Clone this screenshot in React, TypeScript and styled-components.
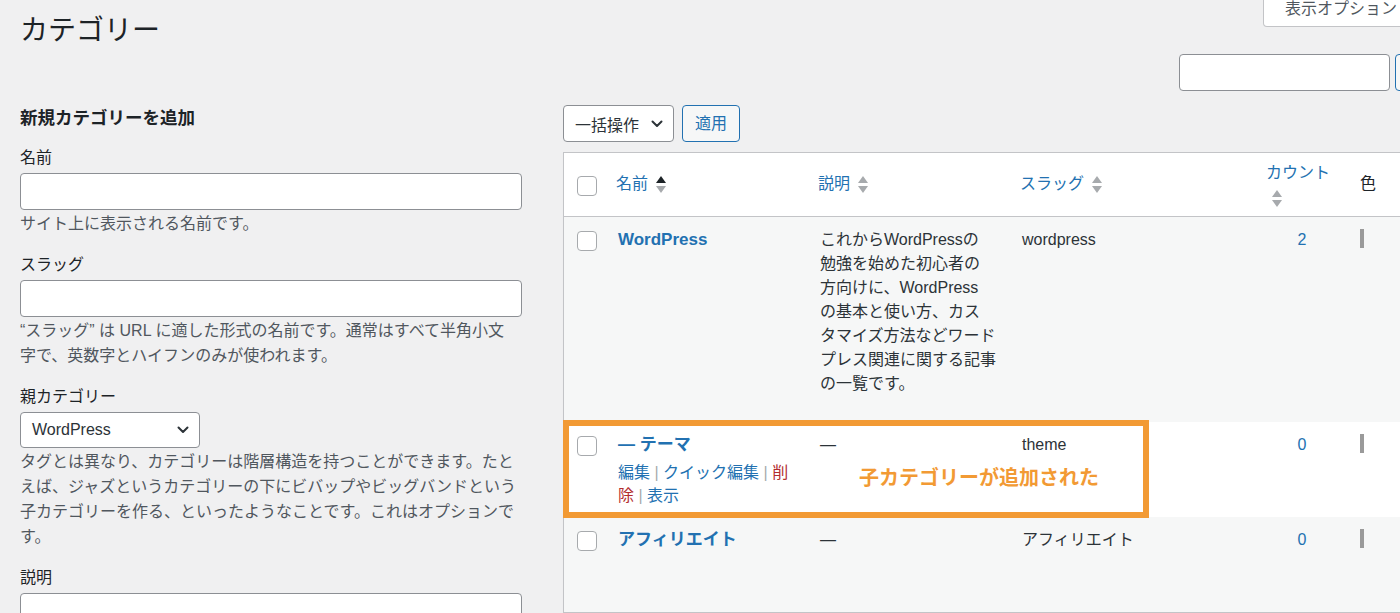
import React from 'react';
import styled, { createGlobalStyle } from 'styled-components';

const GlobalStyle = createGlobalStyle`
  html, body {
    margin: 0;
    padding: 0;
  }
  body {
    background: #f0f0f1;
    color: #1d2327;
    font-family: 'Liberation Sans', 'Noto Sans CJK JP', sans-serif;
    font-size: 16px;
    overflow: hidden;
  }
  * {
    box-sizing: border-box;
  }
`;

type Category = {
  name: string;
  desc: string[];
  slug: string;
  count: number;
  child?: boolean;
};

const categories: Category[] = [
  {
    name: 'WordPress',
    desc: [
      'これからWordPressの',
      '勉強を始めた初心者の',
      '方向けに、WordPress',
      'の基本と使い方、カス',
      'タマイズ方法などワード',
      'プレス関連に関する記事',
      'の一覧です。',
    ],
    slug: 'wordpress',
    count: 2,
  },
  { name: '— テーマ', desc: [], slug: 'theme', count: 0, child: true },
  { name: 'アフィリエイト', desc: [], slug: 'アフィリエイト', count: 0 },
];

const Chevron = () => (
  <svg width="12" height="8" viewBox="0 0 12 8" fill="none">
    <polyline
      points="1.5,1.5 6,6 10.5,1.5"
      stroke="#2c3338"
      strokeWidth="2"
      strokeLinecap="round"
      strokeLinejoin="round"
    />
  </svg>
);

const TabArrow = () => (
  <svg width="20" height="20" viewBox="0 0 20 20">
    <path d="M15 8l-5 6-5-6h10z" fill="#8c8f94" />
  </svg>
);

export default function App() {
  return (
    <>
      <GlobalStyle />
      <Wrap>
        <TopBar>
          <Title>カテゴリー</Title>
          <MetaTabs>
            <MetaTab>
              表示オプション
              <TabArrow />
            </MetaTab>
            <MetaTab>
              ヘルプ
              <TabArrow />
            </MetaTab>
          </MetaTabs>
        </TopBar>

        <SearchRow>
          <SearchInput type="search" />
          <SecondaryButton>カテゴリーを検索</SecondaryButton>
        </SearchRow>

        <Columns>
          <LeftCol>
            <FormTitle>新規カテゴリーを追加</FormTitle>
            <Field>
              <Label>名前</Label>
              <TextInput type="text" />
              <Help>サイト上に表示される名前です。</Help>
            </Field>
            <Field>
              <Label>スラッグ</Label>
              <TextInput type="text" />
              <Help>
                “スラッグ” は URL に適した形式の名前です。通常はすべて半角小文
                <br />
                字で、英数字とハイフンのみが使われます。
              </Help>
            </Field>
            <Field>
              <Label>親カテゴリー</Label>
              <FakeSelect $width={180}>
                WordPress
                <Chevron />
              </FakeSelect>
              <Help>
                タグとは異なり、カテゴリーは階層構造を持つことができます。たとえば、ジャズというカテゴリーの下にビバップやビッグバンドという子カテゴリーを作る、といったようなことです。これはオプションです。
              </Help>
            </Field>
            <Field>
              <Label>説明</Label>
              <TextArea />
            </Field>
          </LeftCol>

          <RightCol>
            <BulkRow>
              <FakeSelect $width={111}>
                一括操作
                <Chevron />
              </FakeSelect>
              <SecondaryButton>適用</SecondaryButton>
            </BulkRow>

            <Table>
              <colgroup>
                <col style={{ width: 42 }} />
                <col style={{ width: 202 }} />
                <col style={{ width: 202 }} />
                <col style={{ width: 246 }} />
                <col style={{ width: 96 }} />
                <col />
              </colgroup>
              <thead>
                <tr>
                  <CheckTh>
                    <Check type="checkbox" />
                  </CheckTh>
                  <Th>
                    <SortLink>
                      名前
                      <Sorting $active />
                    </SortLink>
                  </Th>
                  <Th>
                    <SortLink>
                      説明
                      <Sorting />
                    </SortLink>
                  </Th>
                  <Th>
                    <SortLink>
                      スラッグ
                      <Sorting />
                    </SortLink>
                  </Th>
                  <Th>
                    <StackedSort>
                      カウント
                      <Sorting />
                    </StackedSort>
                  </Th>
                  <Th $plain>色</Th>
                </tr>
              </thead>
              <tbody>
                {categories.map((cat, i) => (
                  <Row key={cat.slug} $alt={i % 2 === 0}>
                    <CheckTd>
                      <Check type="checkbox" />
                      {cat.child && (
                        <Highlight>
                          <Note>子カテゴリーが追加された</Note>
                        </Highlight>
                      )}
                    </CheckTd>
                    <Td>
                      <RowTitle>{cat.name}</RowTitle>
                      <RowActions $visible={!!cat.child}>
                        <ActionLink>編集</ActionLink>
                        <Sep> | </Sep>
                        <ActionLink>クイック編集</ActionLink>
                        <Sep> | </Sep>
                        <ActionLink $danger>削除</ActionLink>
                        <Sep> | </Sep>
                        <ActionLink>表示</ActionLink>
                      </RowActions>
                    </Td>
                    <Td>
                      {cat.desc.length ? (
                        <Desc>
                          {cat.desc.map((line, j) => (
                            <React.Fragment key={j}>
                              {line}
                              {j < cat.desc.length - 1 && <br />}
                            </React.Fragment>
                          ))}
                        </Desc>
                      ) : (
                        '—'
                      )}
                    </Td>
                    <Td>{cat.slug}</Td>
                    <CountTd>
                      <CountLink>{cat.count}</CountLink>
                    </CountTd>
                    <ColorTd>
                      <Swatch />
                    </ColorTd>
                  </Row>
                ))}
              </tbody>
            </Table>
          </RightCol>
        </Columns>
      </Wrap>
    </>
  );
}

const Wrap = styled.div`
  width: 1549px;
  padding-left: 20px;
  display: flex;
  flex-direction: column;
`;

const TopBar = styled.div`
  display: flex;
  justify-content: space-between;
  align-items: flex-start;
`;

const Title = styled.h1`
  margin: 13px 0 0;
  font-size: 28px;
  font-weight: 400;
  line-height: 36px;
  color: #1d2327;
`;

const MetaTabs = styled.div`
  display: flex;
  gap: 6px;
  margin: -6px 10px 0 0;
`;

const MetaTab = styled.div`
  display: flex;
  align-items: center;
  gap: 6px;
  padding: 3px 6px 5px 21px;
  line-height: 24px;
  background: #fff;
  border: 1px solid #c3c4c7;
  border-top: none;
  border-radius: 0 0 4px 4px;
  color: #50575e;
  font-size: 16px;
`;

const SearchRow = styled.div`
  display: flex;
  justify-content: flex-end;
  gap: 5px;
  margin-top: 5px;
`;

const SearchInput = styled.input`
  width: 211px;
  height: 37px;
  margin: 0;
  background: #fff;
  border: 1px solid #8c8f94;
  border-radius: 4px;
`;

const SecondaryButton = styled.button`
  height: 37px;
  margin: 0;
  padding: 0 12px;
  background: #f6f7f7;
  border: 1px solid #2271b1;
  border-radius: 4px;
  color: #2271b1;
  font-family: inherit;
  font-size: 16px;
  line-height: 24px;
  white-space: nowrap;
`;

const Columns = styled.div`
  display: flex;
  gap: 41px;
  margin-top: 14px;
`;

const LeftCol = styled.div`
  width: 502px;
  flex-shrink: 0;
`;

const RightCol = styled.div`
  flex: 1;
  min-width: 0;
`;

const FormTitle = styled.h2`
  margin: 0;
  font-size: 17.5px;
  font-weight: 700;
  line-height: 26px;
  color: #1d2327;
`;

const Field = styled.div`
  display: flex;
  flex-direction: column;
  margin-top: 18px;

  &:first-of-type {
    margin-top: 16px;
  }
`;

const Label = styled.label`
  font-size: 16px;
  line-height: 22px;
  color: #1d2327;
  margin-bottom: 4px;
`;

const TextInput = styled.input`
  width: 502px;
  height: 37px;
  margin: 0;
  background: #fff;
  border: 1px solid #8c8f94;
  border-radius: 4px;
`;

const TextArea = styled.textarea`
  width: 502px;
  height: 110px;
  margin: 0;
  background: #fff;
  border: 1px solid #8c8f94;
  border-radius: 4px;
  resize: none;
`;

const Help = styled.p`
  margin: 1px 0 0;
  font-size: 16px;
  line-height: 25px;
  color: #50575e;
`;

const FakeSelect = styled.div<{ $width: number }>`
  width: ${p => p.$width}px;
  height: 36px;
  display: flex;
  align-items: center;
  justify-content: space-between;
  padding: 0 10px 0 11px;
  background: #fff;
  border: 1px solid #8c8f94;
  border-radius: 4px;
  color: #2c3338;
  font-size: 16px;
  flex-shrink: 0;
`;

const BulkRow = styled.div`
  display: flex;
  gap: 8px;
  height: 37px;

  & > ${FakeSelect} {
    height: 37px;
  }
`;

const Table = styled.table`
  width: 100%;
  margin-top: 10px;
  table-layout: fixed;
  border-collapse: separate;
  border-spacing: 0;
  background: #fff;
  border: 1px solid #c3c4c7;
  box-shadow: 0 1px 1px rgba(0, 0, 0, 0.04);
`;

const Th = styled.th<{ $plain?: boolean }>`
  padding: 8px 10px 9px;
  border-bottom: 1px solid #c3c4c7;
  text-align: left;
  vertical-align: middle;
  font-weight: 400;
  font-size: 16px;
  line-height: 24px;
  color: ${p => (p.$plain ? '#1d2327' : '#2271b1')};

  &:last-child {
    padding-left: 8px;
  }
`;

const CheckTh = styled(Th)`
  padding-left: 13px;
  padding-top: 11px;
`;

const SortLink = styled.span`
  display: inline-flex;
  align-items: center;
  gap: 8px;
`;

const StackedSort = styled.span`
  display: flex;
  flex-direction: column;
  align-items: flex-start;

  & > span {
    margin: 5px 0 0 6px;
  }
`;

const Sorting = styled.span<{ $active?: boolean }>`
  display: inline-flex;
  flex-direction: column;
  gap: 3px;

  &::before,
  &::after {
    content: '';
    width: 0;
    height: 0;
    border-left: 5px solid transparent;
    border-right: 5px solid transparent;
  }
  &::before {
    border-bottom: 7px solid ${p => (p.$active ? '#1d2327' : '#a7aaad')};
  }
  &::after {
    border-top: 7px solid #a7aaad;
  }
`;

const Row = styled.tr<{ $alt: boolean }>`
  background: ${p => (p.$alt ? '#f6f7f7' : '#fff')};
`;

const Td = styled.td`
  padding: 11px 10px 10px 12px;
  vertical-align: top;
  font-size: 16px;
  line-height: 24px;
  color: #2c3338;
`;

const CheckTd = styled(Td)`
  position: relative;
  padding: 14px 0 0 13px;
`;

const Check = styled.input`
  appearance: none;
  display: block;
  width: 20px;
  height: 20px;
  margin: 0;
  background: #fff;
  border: 1px solid #a7aaad;
  border-radius: 4px;
`;

const RowTitle = styled.div`
  font-size: 17px;
  font-weight: 700;
  line-height: 24px;
  color: #2271b1;
`;

const RowActions = styled.div<{ $visible: boolean }>`
  padding-top: 4px;
  font-size: 16px;
  line-height: 23px;
  visibility: ${p => (p.$visible ? 'visible' : 'hidden')};
`;

const ActionLink = styled.span<{ $danger?: boolean }>`
  color: ${p => (p.$danger ? '#b32d2e' : '#2271b1')};
`;

const Sep = styled.span`
  color: #a7aaad;
`;

const Desc = styled.p`
  margin: 0 0 16px;
`;

const CountTd = styled(Td)`
  text-align: center;
  padding-right: 16px;
`;

const CountLink = styled.span`
  color: #2271b1;
`;

const ColorTd = styled(Td)`
  padding-left: 8px;
`;

const Swatch = styled.span`
  display: block;
  width: 4px;
  height: 19px;
  margin-top: 1px;
  background: #9a9a9a;
`;

const Highlight = styled.div`
  position: absolute;
  left: -1px;
  top: -2px;
  width: 586px;
  height: 98px;
  border: 6px solid #f29a34;
  padding: 38px 0 0 290px;
  pointer-events: none;
`;

const Note = styled.span`
  display: block;
  font-size: 20px;
  font-weight: 700;
  line-height: 28px;
  color: #f29a34;
  white-space: nowrap;
`;
